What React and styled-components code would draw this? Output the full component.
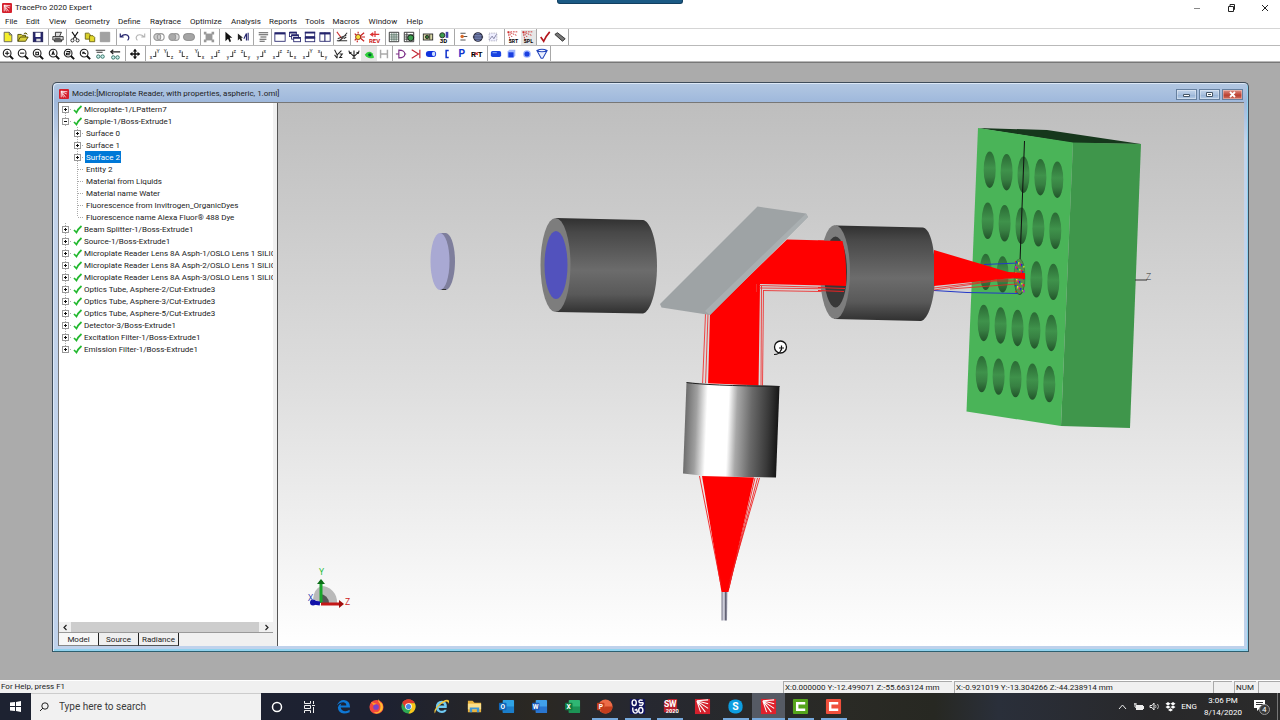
import React, { useState } from 'react';
import styled, { createGlobalStyle, css } from 'styled-components';

const GlobalStyle = createGlobalStyle`
    * {
        box-sizing: border-box;
    }
    body {
        margin: 0;
        font-family: "Roboto", "Open Sans", sans-serif;
        font-size: 8px;
        line-height: 12px;
        color: #222;
        background: #fff;
    }
    button, input {
        font: inherit;
        color: inherit;
        margin: 0;
        padding: 0;
        border: 0;
        background: none;
        border-radius: 0;
    }
    svg {
        display: block;
    }
`;

const Shell = styled.div`
    position: relative;
    display: flex;
    flex-direction: column;
    height: 100vh;
    overflow: hidden;
`;

const DockedTab = styled.div`
    position: absolute;
    top: 0;
    left: 50%;
    width: 126px;
    height: 4px;
    margin-left: -83px;
    background: #1b5a85;
    border: 1px solid #123f60;
    border-top: 0;
    border-radius: 0 0 3px 3px;
`;

const TitleBar = styled.header`
    display: flex;
    align-items: center;
    height: 15px;
    padding-left: 2px;
    gap: 3px;
    h1 {
        flex: 1;
        margin: 0;
        font-size: 8px;
        font-weight: normal;
    }
`;

const CaptionButton = styled.button`
    display: flex;
    align-items: center;
    justify-content: center;
    width: 31px;
    height: 14px;
`;

const MenuBar = styled.nav`
    display: flex;
    height: 14px;
    align-items: center;
    padding-left: 1px;
    border-bottom: 1px solid #d5d5d5;
`;

const MenuButton = styled.button`
    padding: 0 4px;
    white-space: nowrap;
    flex: 0 0 ${(p) => p.$w}px;
    text-align: left;
    line-height: 12px;
`;

const ToolRow = styled.div`
    display: flex;
    height: ${(p) => p.$h}px;
    border-bottom: 1px solid #b9b9b9;
`;

const ToolGroup = styled.div`
    display: flex;
    align-items: center;
    flex: 0 0 ${(p) => p.$w}px;
    border-left: ${(p) => (p.$first ? 0 : 1)}px solid #a8a8a8;
    padding-right: ${(p) => p.$pad || 0}px;
`;

const ToolButton = styled.button`
    display: flex;
    flex: 1 1 0;
    align-items: center;
    justify-content: center;
    height: 15px;
    min-width: 0;
    background: ${(p) => (p.$on ? '#e6e6e6' : 'none')};
`;

const Workspace = styled.main`
    flex: 1;
    min-height: 0;
    display: flex;
    padding: 19px 31px 28px 52px;
    background: #ababab;
    border-top: 1px solid #777;
`;

const ModelWindow = styled.section`
    flex: 1;
    min-width: 0;
    display: flex;
    flex-direction: column;
    border: 1px solid #3f4c59;
    border-bottom-color: #2d6070;
    border-radius: 5px 5px 0 0;
    padding: 0 4px 5px 5px;
    background: linear-gradient(#b3c8e2 0, #a0b9dc 18px, #c3d3ea 60px, #bfd2ec 100%);
    box-shadow: inset 1px 1px 0 #dce8f6, inset -1px -2px 0 #8fd2ee;
`;

const ModelTitle = styled.header`
    display: flex;
    align-items: center;
    height: 19px;
    gap: 3px;
    padding-top: 3px;
    padding-left: 1px;
    h2 {
        flex: 1;
        margin: 0;
        font-size: 8px;
        font-weight: normal;
    }
`;

const FrameButton = styled.button`
    display: flex;
    align-items: center;
    justify-content: center;
    width: 21px;
    height: 11px;
    border: 1px solid #66809f;
    background: ${(p) => (p.$close
        ? 'linear-gradient(#dd9288, #c24a3b 50%, #b23a2c 51%, #d06e5e)'
        : 'linear-gradient(#c3d5eb, #a9c0de 50%, #93afd3 51%, #b6cce6)')};
    box-shadow: inset 0 0 0 1px rgba(255, 255, 255, 0.35);
`;

const FrameButtons = styled.div`
    display: flex;
    gap: 2px;
    padding-right: 1px;
`;

const Split = styled.div`
    flex: 1;
    min-height: 0;
    display: flex;
    border-top: 1px solid #777;
    border-left: 1px solid #777;
`;

const TreePane = styled.aside`
    flex: 0 0 219px;
    display: flex;
    flex-direction: column;
    min-width: 0;
    padding-right: 4px;
    background: #f0f0f0;
    border-right: 1px solid #555;
`;

const Tree = styled.ul`
    flex: 1;
    margin: 0;
    padding: 0;
    overflow: hidden;
    list-style: none;
    background: #fff;
    ul {
        margin: 0;
        padding: 0;
        list-style: none;
    }
`;

const TreeRow = styled.div`
    display: flex;
    align-items: center;
    height: 12px;
    padding-left: ${(p) => (p.$child ? 15 : 3)}px;
    white-space: nowrap;
    svg {
        flex: none;
    }
`;

const TreeLabel = styled.button`
    padding: 1px 1px 0;
    height: 12px;
    line-height: 11px;
    white-space: nowrap;
    ${(p) => p.$selected && css`
        background: #0078d7;
        color: #fff;
    `}
`;

const ScrollBar = styled.div`
    display: flex;
    height: 10px;
    button {
        display: flex;
        align-items: center;
        justify-content: center;
        width: 12px;
    }
    div {
        flex: 1;
        margin-right: 2px;
        background: #cdcdcd;
    }
`;

const TabStrip = styled.div`
    display: flex;
    height: 14px;
    border-top: 1px solid #999;
`;

const Tab = styled.button`
    flex: 0 0 40px;
    line-height: 12px;
    padding-top: 1px;
    border-right: 1px solid #222;
    border-bottom: 1px solid ${(p) => (p.$active ? '#888' : '#555')};
    background: ${(p) => (p.$active ? '#f7f7f7' : '#efefef')};
`;

const Viewport = styled.div`
    flex: 1;
    min-width: 0;
    background: linear-gradient(#bebebe, #dedede 52%, #fff);
    svg {
        width: 100%;
        height: 100%;
    }
`;

const StatusBar = styled.footer`
    display: flex;
    height: 13px;
    align-items: center;
    gap: 2px;
    padding-left: 1px;
    background: #f0f0f0;
    border-top: 1px solid #fff;
    p {
        flex: 1;
        margin: 0;
    }
`;

const StatusPane = styled.div`
    flex: 0 0 ${(p) => p.$w}px;
    height: 12px;
    line-height: 11px;
    padding-left: 1px;
    border-left: 1px solid #a9a9a9;
    border-top: 1px solid #a9a9a9;
    white-space: nowrap;
`;

const TaskBar = styled.footer`
    display: flex;
    height: 27px;
    color: #fff;
    background: linear-gradient(90deg, #1d2231 0, #1d2131 30%, #2b2822 42%, #262831 50%, #2a2a25 66%, #272822 73%, #2a2f3a 78%, #28282a 90%, #2b2b2b);
`;

const TaskButton = styled.button`
    display: flex;
    align-items: center;
    justify-content: center;
    width: ${(p) => p.$w || 32}px;
    min-width: 0;
    height: 27px;
    border-bottom: 2px solid ${(p) => (p.$active ? '#76a9dc' : 'transparent')};
    border-top: 2px solid transparent;
    background: ${(p) => {
        if (p.$active) return '#555a64';
        return p.$open ? 'linear-gradient(#76a9dc, #76a9dc) center bottom / 26px 2px no-repeat border-box' : 'none';
    }};
`;

const SearchBox = styled.label`
    display: flex;
    align-items: center;
    width: 230px;
    gap: 10px;
    padding-left: 8px;
    background: #f1f1f1;
    border-top: 1px solid #ccc;
    input {
        flex: 1;
        min-width: 0;
        font-size: 10px;
        line-height: 16px;
        color: #333;
        outline: 0;
    }
    input::placeholder {
        color: #3a3a3a;
        opacity: 1;
    }
`;

const PinnedApps = styled.div`
    display: grid;
    grid-template-columns: repeat(16, 1fr);
    flex: 0 0 523px;
    margin-left: 2px;
    ${TaskButton} {
        width: auto;
    }
`;

const Tray = styled.div`
    display: flex;
    align-items: center;
    margin-left: auto;
    border-right: 1px solid #777;
    margin-right: 2px;
`;

const TrayButton = styled.button`
    display: flex;
    align-items: center;
    justify-content: center;
    width: ${(p) => p.$w}px;
    height: 26px;
    white-space: nowrap;
`;

const Clock = styled.time`
    width: 46px;
    text-align: center;
    line-height: 12px;
`;

const INK = '#222';
const NAVY = '#24246c';

/* ---- toolbar drawings, all on a 14 x 14 grid ---- */

const rect = (x, y, w, h, fill = 'none', stroke = INK) => (
    <rect x={x} y={y} width={w} height={h} fill={fill} stroke={stroke} />
);

function axis(a, b, flip) {
    return (
        <>
            <path d={flip ? 'M9 4v6H6' : 'M5 4v6h3'} fill="none" stroke="#444" strokeWidth="1.200" />
            <text x={flip ? 10 : 1} y="6" fontSize="6" fill="#222">{a}</text>
            <text x={flip ? 2 : 9} y="13" fontSize="6" fill="#222">{b}</text>
        </>
    );
}

function magnifier(mark) {
    return (
        <>
            <circle cx="6" cy="6" r="4.500" fill="#fff" stroke="#222" strokeWidth="1.300" />
            <path d="M9 9l4 4" stroke="#111" strokeWidth="2.200" />
            <path d={mark} fill="none" stroke="#111" strokeWidth="1.200" />
        </>
    );
}

const ICONS = {
    new: <path d="M2.500 1.500h6l3 3v8h-9zM8.500 1.500v3h3" fill="#f5ee2c" stroke="#555" />,
    open: <path d="M1 12V4h4l1 1h4v2h3l-3 5zM1 12l3-5h6M8 3q3-2 4 1" fill="#d8cf3c" stroke="#454100" />,
    save: <>{rect(1.5, 1.5, 11, 11, '#24246c', '#1b1b50')}<path d="M4 2h6v5H4z" fill="#fff" /><path d="M5 9h5v3H5z" fill="#ddd" /></>,
    print: <><path d="M4 6V1.500h7L9 6M1 6.500h12v4H1zM3 10.500h8v2H3z" fill="#ddd" stroke="#222" /><path d="M3 8.500h7" stroke="#222" /></>,
    cut: <><path d="M3.500 1L9 9M10.500 1L5 9" stroke="#111" strokeWidth="1.300" /><circle cx="4" cy="11" r="1.800" fill="none" stroke="#111" /><circle cx="10" cy="11" r="1.800" fill="none" stroke="#111" /></>,
    copy: <><path d="M1.500 2.500h4l2 2v5h-6z" fill="#d9d02a" stroke="#666010" /><path d="M6.500 5.500h4l2 2v5h-6z" fill="#e4da2e" stroke="#666010" /></>,
    paste: <path d="M1.500 1.500h11v11h-11z" fill="#a2a2a2" stroke="#999" />,
    undo: <path d="M1.500 3v4h4M2 7q4-4 8-2 3 3 0 6" fill="none" stroke={NAVY} strokeWidth="1.400" />,
    redo: <path d="M12.500 3v4h-4M12 7q-4-4-8-2-3 3 0 6" fill="none" stroke="#b3b3b3" strokeWidth="1.300" />,
    subtract: <><circle cx="5" cy="7" r="4" fill="#ccc" stroke="#999" strokeWidth="1.300" /><circle cx="9" cy="7" r="4" fill="none" stroke="#999" strokeWidth="1.300" /></>,
    intersect: <><circle cx="9" cy="7" r="4" fill="#ddd" stroke="#999" strokeWidth="1.300" /><circle cx="5" cy="7" r="4" fill="#aaa" stroke="#999" strokeWidth="1.300" /></>,
    unite: <rect x="0.500" y="3" width="13" height="8" rx="4" fill="#a5a5a5" stroke="#888" />,
    solid: <><path d="M3 3h8v8H3z" fill="#999" /><path d="M1 1h3v3H1zM10 1h3v3h-3zM1 10h3v3H1zM10 10h3v3h-3z" fill="#999" /></>,
    pointer: <path d="M4 1v11l3-3 2 4 1.500-1L9 8h3z" fill="#111" />,
    pointerAlt: <><path d="M1 3v8l2-2 1.500 3L6 11 5 8h2z" fill="#222" /><path d="M8 9l3-6v8M13 2v9" fill="none" stroke={NAVY} strokeWidth="1.300" /></>,
    script: <path d="M2 2h11M2 4.500h11M4 7h7M3 9.500h8M3 12h6" stroke="#555" strokeWidth="1.200" />,
    window: <>{rect(1, 2, 12, 10, '#fff', NAVY)}<path d="M1 3h12" stroke={NAVY} strokeWidth="2" /></>,
    cascade: <>{rect(0.5, 1.5, 8, 5, '#fff', NAVY)}{rect(3, 4.5, 8, 5, '#fff', NAVY)}{rect(5.5, 7.5, 8, 5, '#fff', NAVY)}<path d="M1 2h8M3 5h8M5 8h8" stroke={NAVY} strokeWidth="2" /></>,
    tileH: <>{rect(1.5, 1.5, 11, 5, '#fff', NAVY)}{rect(1.5, 7.5, 11, 5, '#fff', NAVY)}<path d="M1 2h12M1 8h12" stroke={NAVY} strokeWidth="2" /></>,
    tileV: <>{rect(1, 2, 6, 10, '#fff', NAVY)}{rect(7, 2, 6, 10, '#fff', NAVY)}<path d="M1 3h12" stroke={NAVY} strokeWidth="2" /></>,
    rays: <><path d="M1 1l6 8" stroke="#c33" strokeWidth="1.300" /><path d="M7 9l6-7M2 9l10-4M1 11.500h12M7 9l-4 3M9 9l3-2" fill="none" stroke="#333" strokeWidth="1.200" /></>,
    source: <><path d="M7 7l6-5M8 7h6M7 7l6 5M6 3V1M5 11v2M2 3l2 2M2 11l2-2" stroke="#c22" strokeWidth="1.400" /><circle cx="6" cy="7" r="3" fill="#f4e13c" stroke="#8a2213" /></>,
    reverse: <><path d="M2 4h10M5 2L2 4l3 2M7 0v7" fill="none" stroke="#d33" strokeWidth="1.400" /><text x="0" y="14" fontSize="7" fontWeight="bold" fill="#c22">REV</text></>,
    grid: <><path d="M1.500 1.500h11v11h-11z" fill="#fff" stroke="#222" /><path d="M4.500 2v10M7 2v10M9.500 2v10M2 4.500h10M2 7h10M2 9.500h10" stroke="#354" strokeWidth="0.800" /></>,
    gridMap: <><path d="M1.500 1.500h11v11h-11z" fill="#fff" stroke="#222" /><path d="M4.500 2v10M2 4.500h10M2 7h5M2 9.500h5" stroke="#333" /><circle cx="9" cy="8" r="3.500" fill="#3b9c4e" stroke="#111" /></>,
    candela: <>{rect(1.5, 3.5, 11, 7, '#d7d7a6')}<circle cx="6" cy="7" r="2" fill="#373" stroke="#222" /><path d="M9 4v6" stroke="#222" /></>,
    globe3d: <><circle cx="5" cy="5" r="3" fill="#3b9c4e" stroke="#222" /><path d="M9 1h3v7H9z" fill="#44a" /><text x="2" y="14" fontSize="7" fontWeight="bold">3D</text></>,
    polar: <><path d="M4 2.500h6M7 6.500h5M4 10.500h6" stroke="#555" strokeWidth="1.200" /><circle cx="6" cy="6.500" r="2" fill="#d96a2a" /></>,
    sphere: <><circle cx="7" cy="7" r="5" fill="#8fa2e0" stroke="#223" strokeWidth="1.300" /><path d="M1 7h12M3 4.500h8M3 9.500h8" stroke="#223" /></>,
    chart: <><path d="M2.500 2.500h9v9h-9z" fill="#eef" stroke="#99a" strokeDasharray="1 1" /><path d="M3 10l3-4 2 3 3-5" fill="none" stroke="#779" /></>,
    sort: <><path d="M1 1l3 11M1 1l5 6M1 1l10 4M1 1l12 0" stroke="#c22" strokeDasharray="2 1" /><text x="2" y="14" fontSize="6" fontWeight="bold">SRT</text></>,
    spline: <><path d="M1 1l3 11M1 1l5 6M1 1l10 4M1 1l12 0" stroke="#c22" strokeDasharray="2 1" /><text x="2" y="14" fontSize="6" fontWeight="bold">SPL</text></>,
    check: <path d="M2 7l3.500 5Q8 6 12.500 1" fill="none" stroke="#b3151c" strokeWidth="1.900" />,
    eraser: <path d="M1 4l3-2 9 7-3 3z" fill="#777" stroke="#222" />,
    zoomIn: magnifier('M3.500 6h5M6 3.500v5'),
    zoomOut: magnifier('M3.500 6h5'),
    zoomWin: magnifier('M4.500 5h3v3h-3z'),
    zoomAll: magnifier('M4.500 8l1.500-4 1.500 4M5 7h2'),
    zoomSel: magnifier('M4 4h4v2H4v2h4'),
    zoomPrev: magnifier('M8 7L4.500 5M4.500 7V5h2'),
    glasses: <><path d="M2 2.500h11M3 5h7" stroke="#333" strokeWidth="1.200" /><circle cx="5" cy="10" r="2" fill="#cee" stroke="#265" /><circle cx="10" cy="10" r="2" fill="#cee" stroke="#265" /></>,
    glassesBack: <><path d="M2 4.500h11M5 2L2 4.500 5 7" fill="none" stroke="#222" strokeWidth="1.300" /><circle cx="5" cy="11" r="2" fill="#cee" stroke="#265" /><circle cx="10" cy="11" r="2" fill="#cee" stroke="#265" /></>,
    pan: <><path d="M7 2v10M2 7h10" stroke="#111" strokeWidth="1.700" /><path d="M7 1l2.500 3h-5zM7 13l2.500-3h-5zM1 7l3-2.500v5zM13 7l-3-2.500v5z" fill="#111" /></>,
    a1: axis('Y', 'x', true),
    a2: axis('Y', 'z'),
    a3: axis('x', 'z'),
    a4: axis('Y', 'x'),
    a5: axis('z', 'x', true),
    a6: axis('z', 'y', true),
    a7: axis('z', 'y'),
    a8: axis('x', 'y', true),
    a9: axis('z', 'x', true),
    a10: axis('z', 'x'),
    a11: axis('Y', 'x', true),
    a12: axis('x', 'y'),
    a13: <path d="M3 2l3 6 5-5M6 8v4M9 7h3l-3 4h3M3 8l3 4" fill="none" stroke="#222" strokeWidth="1.200" />,
    a14: <path d="M7 3v9M2 5l5 5 5-5M1 3l1 3 2-1M13 3l-1 3-2-1M5 12h4" fill="none" stroke="#222" strokeWidth="1.300" />,
    eye: <><path d="M2 8q4-6 9-2l2 5q-7 3-11-3" fill="#2fcf3a" /><circle cx="8" cy="8" r="2" fill="#063" /></>,
    hidden: <path d="M3 2v10M11 2v10M3 7h8" stroke="#aaa" strokeWidth="1.700" />,
    lens: <path d="M4.500 2.500v9q7 0 7-4.500t-7-4.500zM4 7H1M11 7h2" fill="#fff" stroke="#7a2c86" strokeWidth="1.300" />,
    mirror: <path d="M2 2l8 5-8 5M11.500 2v10" fill="none" stroke="#c22430" strokeWidth="1.300" />,
    tube: <><rect x="1" y="3.500" width="12" height="7" rx="3.500" fill="#1133dd" /><ellipse cx="10" cy="7" rx="2" ry="2.500" fill="#cfe0ff" /></>,
    bracket: <path d="M9 3H6v8h3" fill="none" stroke="#1133cc" strokeWidth="1.800" />,
    letterP: <text x="3" y="11" fontSize="12" fontWeight="bold" fill="#1133cc">P</text>,
    rt: <><text x="0" y="11" fontSize="9" fontWeight="bold">R</text><text x="8" y="11" fontSize="9" fontWeight="bold">T</text><path d="M5 5l3 3M8 5L5 8" stroke="#c22" strokeWidth="1.300" /></>,
    rod: <><rect x="1" y="3.500" width="12" height="7" rx="2" fill="#1a44e0" /><path d="M3 5.500h5" stroke="#9bf" /></>,
    block: <><path d="M3 4l2-2h7v7l-2 2H3z" fill="#9fb6ff" /><path d="M4 5h6v6H4z" fill="#1a3fe0" /></>,
    ball: <><circle cx="7" cy="7" r="4.500" fill="#9fb6ff" /><circle cx="7" cy="7" r="3" fill="#1a3fe0" /></>,
    cone: <path d="M1 3q6-3 12 0L8 12H6zM1 3q6 3 12 0" fill="#e8eeff" stroke="#2244bb" strokeWidth="1.200" />
};

function Icon({ name }) {
    return <svg width="12" height="12" viewBox="0 0 14 14" aria-hidden="true">{ICONS[name]}</svg>;
}

const MENUS = [
    ['File', 21], ['Edit', 23], ['View', 26], ['Geometry', 43], ['Define', 32], ['Raytrace', 40], ['Optimize', 41],
    ['Analysis', 38], ['Reports', 36], ['Tools', 27], ['Macros', 36], ['Window', 38], ['Help', 26]
];

const TOP_TOOLS = [
    { w: 48, pad: 2, items: ['new', 'open', 'save'] },
    { w: 18, items: ['print'] },
    { w: 50, pad: 3, items: ['cut', 'copy', 'paste'] },
    { w: 34, pad: 2, items: ['undo', 'redo'] },
    { w: 50, pad: 3, items: ['subtract', 'intersect', 'unite'] },
    { w: 19, pad: 2, items: ['solid'] },
    { w: 34, pad: 2, items: ['pointer', 'pointerAlt'] },
    { w: 18, items: ['script'] },
    { w: 62, items: ['window', 'cascade', 'tileH', 'tileV'] },
    { w: 17, items: ['rays'] },
    { w: 35, pad: 2, items: ['source', 'reverse'] },
    { w: 34, pad: 2, items: ['grid', 'gridMap'] },
    { w: 35, pad: 2, items: ['candela', 'globe3d'] },
    { w: 50, pad: 3, items: ['polar', 'sphere', 'chart'] },
    { w: 32, items: ['sort', 'spline'] },
    { w: 32, items: ['check', 'eraser'] },
    { w: 1, items: [] }
];

const VIEW_TOOLS = [
    { w: 125, pad: 2, items: ['zoomIn', 'zoomOut', 'zoomWin', 'zoomAll', 'zoomSel', 'zoomPrev', 'glasses', 'glassesBack'] },
    { w: 20, pad: 2, items: ['pan'] },
    { w: 247, items: ['a1', 'a2', 'a3', 'a4', 'a5', 'a6', 'a7', 'a8', 'a9', 'a10', 'a11', 'a12', 'a13', 'a14', 'eye', 'hidden'] },
    { w: 95, pad: 2, items: ['lens', 'mirror', 'tube', 'bracket', 'letterP', 'rt'] },
    { w: 63, items: ['rod', 'block', 'ball', 'cone'] },
    { w: 1, items: [] }
];

function Toolbar({ groups, height, pressed }) {
    return (
        <ToolRow $h={height} role="toolbar">
            {groups.map((group, i) => (
                <ToolGroup key={`group-${group.items[0] || 'end'}`} $w={group.w} $pad={group.pad} $first={i === 0}>
                    {group.items.map((name) => (
                        <ToolButton key={name} type="button" aria-label={name} $on={pressed === name}>
                            <Icon name={name} />
                        </ToolButton>
                    ))}
                </ToolGroup>
            ))}
        </ToolRow>
    );
}

const TREE = [
    { label: 'Microplate-1/LPattern7' },
    {
        label: 'Sample-1/Boss-Extrude1',
        children: [
            'Surface 0', 'Surface 1', 'Surface 2', 'Entity 2', 'Material from Liquids', 'Material name Water',
            'Fluorescence from Invitrogen_OrganicDyes', 'Fluorescence name Alexa Fluor® 488 Dye'
        ]
    },
    { label: 'Beam Splitter-1/Boss-Extrude1' },
    { label: 'Source-1/Boss-Extrude1' },
    { label: 'Microplate Reader Lens 8A Asph-1/OSLO Lens 1 SILICA' },
    { label: 'Microplate Reader Lens 8A Asph-2/OSLO Lens 1 SILICA' },
    { label: 'Microplate Reader Lens 8A Asph-3/OSLO Lens 1 SILICA' },
    { label: 'Optics Tube, Asphere-2/Cut-Extrude3' },
    { label: 'Optics Tube, Asphere-3/Cut-Extrude3' },
    { label: 'Optics Tube, Asphere-5/Cut-Extrude3' },
    { label: 'Detector-3/Boss-Extrude1' },
    { label: 'Excitation Filter-1/Boss-Extrude1' },
    { label: 'Emission Filter-1/Boss-Extrude1' }
];

function Branch({ open, box = true, check, first, last }) {
    return (
        <svg width={check ? 21 : 11} height="12" viewBox={`0 0 ${check ? 21 : 11} 12`} aria-hidden="true">
            <path d={`M3.500 ${first ? 6 : 0}V${last ? 6 : 12}M4 6.500h6`} stroke="#aaa" strokeDasharray="1 1" />
            {box && (
                <>
                    <rect x="0.500" y="3.500" width="6" height="6" fill="#fff" stroke="#999" />
                    <path d={open ? 'M2 6.500h3' : 'M2 6.500h3M3.500 5v3'} stroke="#111" />
                </>
            )}
            {check && <path d="M12 7l2.500 2.500Q16 6 19.500 3" fill="none" stroke="#22b82e" strokeWidth="1.700" />}
        </svg>
    );
}

function ModelTree() {
    const [selected, setSelected] = useState('Surface 2');

    return (
        <Tree>
            {TREE.map((node, i) => (
                <li key={node.label}>
                    <TreeRow>
                        <Branch check open={!!node.children} first={i === 0} last={i === TREE.length - 1} />
                        <TreeLabel type="button" $selected={selected === node.label} onClick={() => setSelected(node.label)}>
                            {node.label}
                        </TreeLabel>
                    </TreeRow>
                    {node.children && (
                        <ul>
                            {node.children.map((label, n) => (
                                <li key={label}>
                                    <TreeRow $child>
                                        <Branch box={n < 3} last={n === node.children.length - 1} />
                                        <TreeLabel type="button" $selected={selected === label} onClick={() => setSelected(label)}>
                                            {label}
                                        </TreeLabel>
                                    </TreeRow>
                                </li>
                            ))}
                        </ul>
                    )}
                </li>
            ))}
        </Tree>
    );
}

/* ---- the 3D model ---- */

const STEPS = [0, 1, 2, 3, 4];
const SPECKS = ['#e22', '#22d', '#2b4', '#dd2', '#a2c'];

function Scene() {
    return (
        <svg viewBox="278 103 966 543" preserveAspectRatio="xMidYMid slice" role="img" aria-label="Microplate reader model">
            <defs>
                <linearGradient id="tube" x1="0" y1="0" x2="0" y2="1">
                    <stop offset="0" stopColor="#303030" />
                    <stop offset="0.150" stopColor="#484848" />
                    <stop offset="0.550" stopColor="#6c6c6c" />
                    <stop offset="0.800" stopColor="#595959" />
                    <stop offset="1" stopColor="#303030" />
                </linearGradient>
                <linearGradient id="steel" x1="0" y1="0" x2="1" y2="0.040">
                    <stop offset="0" stopColor="#5c5c5c" />
                    <stop offset="0.150" stopColor="#a0a0a0" />
                    <stop offset="0.260" stopColor="#fff" />
                    <stop offset="0.480" stopColor="#fff" />
                    <stop offset="0.570" stopColor="#a8a8a8" />
                    <stop offset="0.720" stopColor="#6a6a6a" />
                    <stop offset="0.900" stopColor="#383838" />
                    <stop offset="1" stopColor="#161616" />
                </linearGradient>
                <linearGradient id="well" x1="0" y1="0" x2="0" y2="1">
                    <stop offset="0" stopColor="#2a6a34" />
                    <stop offset="0.450" stopColor="#3f924b" />
                    <stop offset="0.700" stopColor="#378042" />
                    <stop offset="1" stopColor="#22542a" />
                </linearGradient>
                <linearGradient id="fiber">
                    <stop offset="0" stopColor="#777788" />
                    <stop offset="0.450" stopColor="#e8e8f4" />
                    <stop offset="0.600" stopColor="#555566" />
                    <stop offset="1" stopColor="#a8a8bb" />
                </linearGradient>
            </defs>

            {/* emission filter */}
            <path d="M440 233h6c5 1 9 13 9 28s-4 28-9 29h-6z" fill="#7e7e9c" />
            <path d="M440 289.500h6" stroke="#333" />
            <ellipse cx="440" cy="261.500" rx="9.500" ry="28.500" fill="#a9a9d3" />

            {/* detector tube */}
            <path d="M556 218l87 2c7 1 14 19 14 46s-7 46-14 47.500l-87-1.500z" fill="url(#tube)" />
            <ellipse cx="555.500" cy="265" rx="15" ry="47" fill="#7d7d7d" />
            <ellipse cx="556" cy="265" rx="11.500" ry="34" fill="#5252bd" />

            {/* rays between the tubes */}
            <path d="M710 314L787 239.500L846 241V286L760 284L758.500 388L708 386z" fill="#f00" />
            <path d="M705.500 314l-3 71M708 314l-2.500 71M761.500 286l-.500 100M763.500 290l-1 96M759 288l87 1M759 285.500l87 2.500M763 290.500l83 1.500M756.500 284v8" fill="none" stroke="#e33" strokeWidth="0.900" />

            {/* beam splitter */}
            <path d="M660 304L757.500 206.500L806 213.500L808 217L710 315L661.500 307.500z" fill="#9ea3a5" />
            <path d="M710 315L808 217L806 213.500L705 311z" fill="#a9afb1" />

            {/* objective tube */}
            <path d="M836 225.500l87 2c7 1 12 19 12 46s-7 46-14 47.500l-87-2z" fill="url(#tube)" />
            <ellipse cx="835" cy="272" rx="15" ry="47" fill="#7d7d7d" />
            <ellipse cx="835.500" cy="272" rx="11.500" ry="35.500" fill="#383838" />
            <path d="M818 240.500L842.500 241Q847 258 846 286L818 285z" fill="#f00" />
            <path d="M818 287.500l27 1M818 290.500l26 1" stroke="#e22" />

            {/* condenser */}
            <path d="M686.500 382.500L779.500 386L776 477.500L710 476.500L683 473.500z" fill="url(#steel)" />
            <path d="M686.500 382.500q20 3 93 4" fill="none" stroke="#222" />
            <path d="M702 476L754 477.500L728.500 592H721.500z" fill="#f00" />
            <path d="M699.500 476L721 585M755 478L729 588M757.500 478L729 586M759.500 478L730 580" stroke="#e22" strokeWidth="0.900" fill="none" />
            <path d="M721.500 592h6l-.500 28.500h-5.500z" fill="url(#fiber)" />

            {/* microplate */}
            <path d="M978 128L1047 130L1141 144L1072 143z" fill="#16371c" />
            <path d="M978 128L1073 142.500L1061 426L966.500 411.500z" fill="#4ab458" />
            <path d="M1073 142.500L1141 144L1130 428L1061 426z" fill="#3f964b" />
            {STEPS.map((row) => STEPS.map((col) => (
                <ellipse
                    key={`well-${row}-${col}`}
                    cx={989.7 + col * 16.9 - row * 2}
                    cy={169.7 + col * 2.5 + row * 51.1}
                    rx="6"
                    ry="18.200"
                    fill="url(#well)"
                />
            )))}
            <path d="M1024.500 141L1020 262" stroke="#111" />

            {/* focused rays */}
            <ellipse cx="1019.500" cy="276.500" rx="5" ry="17.500" fill="#5a8a4a" />
            {Array.from({ length: 64 }, (_, i) => (
                <rect
                    key={`speck-${i}`}
                    x={1015 + ((i * 7) % 9)}
                    y={261 + ((i * 11) % 31)}
                    width="1.500"
                    height="1.500"
                    fill={SPECKS[i % 5]}
                />
            ))}
            <path d="M984 264.500l34-1.500M934 290.500l33 2 51 1" fill="none" stroke="#2338c8" />
            <path d="M934 250L1008 272L1025 273V279L1012 278L934 286z" fill="#f00" />
            <path d="M934 288l80-10M934 290l60-9 23 0M950 289l67-5" fill="none" stroke="#e22" strokeWidth="0.800" />
            <path d="M1135 280h12" stroke="#333" />
            <text x="1146" y="280" fontSize="9" fontFamily="Open Sans" fontWeight="300" fill="#333">Z</text>

            {/* rotate cursor */}
            <circle cx="780.500" cy="347" r="6" fill="#fff" stroke="#111" strokeWidth="1.300" />
            <path d="M779 348h5M781.500 345.500v5M774 354.500q6 0 7-5" fill="none" stroke="#111" strokeWidth="1.200" />

            {/* view triad */}
            <path d="M321 603v-17a16 16 0 0 1 16 17zM321 586q-7 3-8 13l8 4z" fill="#b9b9b9" />
            <path d="M320 603v-9a9 9 0 0 1 9 9z" fill="#555" />
            <path d="M321 603V581" stroke="#18a62a" strokeWidth="3" />
            <path d="M321 579l-4 5h8z" fill="#0c6e18" />
            <path d="M321 604h19" stroke="#c41616" strokeWidth="3" />
            <path d="M344 604l-5-4v8z" fill="#a00d0d" />
            <path d="M313 602.500l7 1" stroke="#11a" strokeWidth="4" />
            <circle cx="313" cy="602.500" r="3" fill="#1212a8" />
            <g fontFamily="Open Sans" fontSize="9">
                <text x="319" y="575" fill="#2b3">Y</text>
                <text x="345" y="605" fill="#c22">Z</text>
                <text x="308" y="601" fill="#23a">X</text>
            </g>
        </svg>
    );
}

/* ---- app and taskbar icons, 18 x 18 ---- */

const TP_MARK = (
    <path d="M3 3l12 3M3 3l12 8M3 3l9 12M3 3l4 12M3 3l12-1" stroke="#fff" fill="none" strokeWidth="1.100" />
);

function office(letter, dark, light) {
    return (
        <>
            <rect x="5" y="2" width="12" height="14" rx="1" fill={light} />
            <path d="M5 9h12v6a1 1 0 0 1-1 1H6a1 1 0 0 1-1-1z" fill={dark} opacity="0.600" />
            <rect x="1" y="5" width="8" height="8" rx="1" fill={dark} />
            <text x="5" y="11.500" fontSize="7" fontWeight="bold" fill="#fff" textAnchor="middle">{letter}</text>
        </>
    );
}

const APPS = [
    { name: 'Edge', art: <path d="M2 8Q4 2 9.500 2 16 2.500 16 10H6q1 4 5 4 2.500 0 4.500-1.500V15q-3 1.500-6 1.500-6-.500-6.500-6.500Q3.500 7 7 5.500 6 7 6 8h6q0-3-3-3.500Q5 4.500 2 8z" fill="#0f78d4" /> },
    { name: 'Firefox', art: <><circle cx="9" cy="9.500" r="7.500" fill="#f4483e" /><path d="M11 1q1 3 4 5 2 5-1 8-4 4-8 1 6 1 7-4 1-4-2-7z" fill="#ffbd2e" /><path d="M3 4l3 1 3 1-2 3z" fill="#ff9a2b" /><circle cx="8.500" cy="9.500" r="3" fill="#7b42c8" /></> },
    { name: 'Chrome', art: <><circle cx="9" cy="9" r="7.500" fill="#2ea853" /><path d="M2.500 5.200A7.500 7.500 0 0 1 15.500 5.200L9 6z" fill="#e33b2e" /><path d="M2.500 5.200L5.800 11 9 5.500h6.600A7.500 7.500 0 0 0 2.500 5.200z" fill="#e33b2e" /><path d="M15.600 5.500A7.500 7.500 0 0 1 9 16.500l3.200-5.600L9.500 5.500z" fill="#fbc51b" /><circle cx="9" cy="9" r="3.500" fill="#fff" /><circle cx="9" cy="9" r="2.700" fill="#4b86e8" /></> },
    { name: 'Internet Explorer', art: <><path d="M14.500 10.500H6q.500 3 3.500 3 2 0 2.500-1h2.500Q13 16 9.500 16q-6.500-.500-6.500-6.500T9.500 3q6 .500 5 7.500zM6 8h6Q11.500 5.500 9 5.500T6 8z" fill="#6fc9f2" /><path d="M2 16.500Q0 13 6 7t10-5q2 1 0 4 0-3-3-2Q4 8 2 16.500z" fill="#f3c63a" /></> },
    { name: 'File Explorer', art: <><path d="M2 3h5l2 2h7v10H2z" fill="#eab33d" /><path d="M2 6h14v6H2z" fill="#fbdf8b" /><path d="M4 15v-5h10v5h-2.500v-3h-5v3z" fill="#3c96d8" /></> },
    { name: 'Outlook', art: office('O', '#0f65b8', '#2fa3e6') },
    { name: 'Word', art: office('W', '#1a5abc', '#41a0ea') },
    { name: 'Excel', art: office('X', '#107c41', '#2fb673') },
    { name: 'PowerPoint', open: true, art: <><circle cx="10" cy="9" r="7.500" fill="#ed6c47" /><path d="M10 9h7.500a7.500 7.500 0 0 1-13 5z" fill="#c43e1c" /><rect x="1" y="5" width="8" height="8" rx="1" fill="#c43e1c" /><text x="3" y="11.500" fontSize="7" fontWeight="bold" fill="#fff">P</text></> },
    { name: 'OSLO', open: true, art: <><rect x="1" y="1" width="16" height="16" fill="#12155c" /><g fill="none" stroke="#fff" strokeWidth="1.500"><ellipse cx="5.500" cy="5" rx="2.200" ry="3" /><path d="M14.500 2.500q-4-1-4 1t3 1.500 0 3l-3-.500" /><path d="M4 10v2q0 4 3 4t1-4l-2 1" /><ellipse cx="12.500" cy="13" rx="2.200" ry="3" /></g></> },
    { name: 'SOLIDWORKS', open: true, art: <><path d="M2 4l5-3h9v11l-3 3H2z" fill="#b9202a" /><text x="2" y="10" fontSize="9" fontWeight="bold" fill="#fff">SW</text><text x="4" y="16" fontSize="6" fontWeight="bold" fill="#fff">2020</text></> },
    { name: 'TracePro', art: <><rect x="1" y="1" width="16" height="16" fill="#d4202c" />{TP_MARK}</> },
    { name: 'Skype', open: true, art: <><rect x="1.500" y="1.500" width="15" height="15" rx="6.500" fill="#0d9de0" /><text x="9" y="13" fontSize="11" fontWeight="bold" fill="#fff" textAnchor="middle">S</text></> },
    { name: 'TracePro 2020', open: true, active: true, art: <><rect x="1" y="1" width="16" height="16" fill="#e0202b" />{TP_MARK}</> },
    { name: 'Camtasia', open: true, art: <><rect x="1" y="1" width="16" height="16" rx="1" fill="#55a51c" /><path d="M14 5.500H5.500v7H14" fill="none" stroke="#fff" strokeWidth="2.600" /></> },
    { name: 'Camtasia Recorder', open: true, art: <><rect x="1" y="1" width="16" height="16" rx="1" fill="#f0503c" /><path d="M14 5.500H5.500v7H14" fill="none" stroke="#fff" strokeWidth="2.600" /></> }
];

function Logo({ size }) {
    return (
        <svg width={size} height={size} viewBox="0 0 18 18" aria-hidden="true">
            <rect width="18" height="18" rx="2" fill="#d5202c" />
            <path d="M4 4v11M4 4l11 1M4 4l10 5M4 4l8 11M4 4l4 11" stroke="#fff" strokeWidth="1.400" />
        </svg>
    );
}

export default function App() {
    const [tab, setTab] = useState('Model');

    return (
        <Shell>
            <GlobalStyle />
            <TitleBar>
                <Logo size={10} />
                <h1>TracePro 2020 Expert</h1>
                <CaptionButton type="button" aria-label="Minimize">
                    <svg width="8" height="8"><path d="M1 4.500h6" stroke="#888" /></svg>
                </CaptionButton>
                <CaptionButton type="button" aria-label="Restore">
                    <svg width="8" height="8"><path d="M1.500 2.500h5v5h-5zM3 2.500v-2h4.500v5H6" fill="none" stroke="#222" /></svg>
                </CaptionButton>
                <CaptionButton type="button" aria-label="Close">
                    <svg width="8" height="8"><path d="M1 1l6 6M7 1L1 7" stroke="#222" /></svg>
                </CaptionButton>
            </TitleBar>
            <DockedTab />
            <MenuBar>
                {MENUS.map(([label, width]) => (
                    <MenuButton key={label} type="button" $w={width}>{label}</MenuButton>
                ))}
            </MenuBar>
            <Toolbar groups={TOP_TOOLS} height={17} pressed="spline" />
            <Toolbar groups={VIEW_TOOLS} height={16} pressed="eye" />

            <Workspace>
                <ModelWindow>
                    <ModelTitle>
                        <Logo size={10} />
                        <h2>Model:[Microplate Reader, with properties, aspheric, 1.oml]</h2>
                        <FrameButtons>
                            <FrameButton type="button" aria-label="Minimize model">
                                <svg width="9" height="7"><path d="M1.500 3.500h6v2h-6z" fill="#fff" stroke="#456" /></svg>
                            </FrameButton>
                            <FrameButton type="button" aria-label="Maximize model">
                                <svg width="9" height="7"><path d="M1.500 1.500h6v4h-6z" fill="#fff" stroke="#456" /><path d="M3 3.500h3" stroke="#456" /></svg>
                            </FrameButton>
                            <FrameButton type="button" aria-label="Close model" $close>
                                <svg width="9" height="7"><path d="M2 1l5 5M7 1L2 6" stroke="#fff" strokeWidth="1.800" /></svg>
                            </FrameButton>
                        </FrameButtons>
                    </ModelTitle>
                    <Split>
                        <TreePane>
                            <ModelTree />
                            <ScrollBar>
                                <button type="button" aria-label="Scroll left">
                                    <svg width="6" height="7"><path d="M4.500 1L2 3.500 4.500 6" fill="none" stroke="#222" strokeWidth="1.200" /></svg>
                                </button>
                                <div />
                                <button type="button" aria-label="Scroll right">
                                    <svg width="6" height="7"><path d="M1.500 1L4 3.500 1.500 6" fill="none" stroke="#222" strokeWidth="1.200" /></svg>
                                </button>
                            </ScrollBar>
                            <TabStrip>
                                {['Model', 'Source', 'Radiance'].map((name) => (
                                    <Tab key={name} type="button" $active={tab === name} onClick={() => setTab(name)}>{name}</Tab>
                                ))}
                            </TabStrip>
                        </TreePane>
                        <Viewport>
                            <Scene />
                        </Viewport>
                    </Split>
                </ModelWindow>
            </Workspace>

            <StatusBar>
                <p>For Help, press F1</p>
                <StatusPane $w={169}>X:0.000000 Y:-12.499071 Z:-55.663124 mm</StatusPane>
                <StatusPane $w={257}>X:-0.921019 Y:-13.304266 Z:-44.238914 mm</StatusPane>
                <StatusPane $w={19} />
                <StatusPane $w={22}>NUM</StatusPane>
                <StatusPane $w={22} />
            </StatusBar>

            <TaskBar>
                <TaskButton type="button" aria-label="Start" $w={31}>
                    <svg width="11" height="11"><path d="M0 1.500L5 1v4H0zM6 1l5-1v5H6zM0 6h5v4L0 9.500zM6 6h5v5l-5-1z" fill="#fff" /></svg>
                </TaskButton>
                <SearchBox>
                    <svg width="10" height="10" aria-hidden="true"><circle cx="6" cy="4" r="3.200" fill="none" stroke="#222" /><path d="M4 6L1 9" stroke="#222" /></svg>
                    <input type="text" aria-label="Search" placeholder="Type here to search" />
                </SearchBox>
                <TaskButton type="button" aria-label="Cortana">
                    <svg width="12" height="12"><circle cx="6" cy="6" r="4.500" fill="none" stroke="#fff" strokeWidth="1.500" /></svg>
                </TaskButton>
                <TaskButton type="button" aria-label="Task view">
                    <svg width="12" height="12"><path d="M1.500 0v2.500h6V0M1.500 4.500h6v3h-6zM1.500 12V9.500h6V12M10.500 0v3M10.500 6v6M9 4.500h3" fill="none" stroke="#eee" /></svg>
                </TaskButton>
                <PinnedApps>
                    {APPS.map((app) => (
                        <TaskButton key={app.name} type="button" aria-label={app.name} $open={app.open} $active={app.active}>
                            <svg width="17" height="17" viewBox="0 0 18 18">{app.art}</svg>
                        </TaskButton>
                    ))}
                </PinnedApps>
                <Tray>
                    <TrayButton type="button" aria-label="Show hidden icons" $w={16}>
                        <svg width="9" height="6"><path d="M1 5l3.500-4L8 5" fill="none" stroke="#eee" /></svg>
                    </TrayButton>
                    <TrayButton type="button" aria-label="Battery" $w={16}>
                        <svg width="11" height="8"><path d="M3 2h7v5H3z" fill="#eee" /><path d="M10.500 3v3M1 1h3M2 0v4l2 1" stroke="#eee" fill="none" /></svg>
                    </TrayButton>
                    <TrayButton type="button" aria-label="Volume" $w={16}>
                        <svg width="11" height="9"><path d="M1 3.500h2l2-2.500v7L3 5.500H1z" fill="none" stroke="#eee" /><path d="M6.500 3q1 1.500 0 3M8.500 2q2 2.500 0 5" fill="none" stroke="#bbb" /></svg>
                    </TrayButton>
                    <TrayButton type="button" aria-label="Dropbox" $w={16}>
                        <svg width="11" height="10"><path d="M3 0l2.500 1.700L3 3.400.500 1.700zM8 0l2.500 1.700L8 3.400 5.500 1.700zM3 3.400l2.500 1.700L3 6.800.500 5.100zM8 3.400l2.500 1.700L8 6.800 5.500 5.100zM5.500 6.200L8 7.900 5.500 9.600 3 7.900z" fill="#fff" /></svg>
                    </TrayButton>
                    <TrayButton type="button" $w={22}>ENG</TrayButton>
                    <Clock>3:06 PM<br />8/14/2020</Clock>
                    <TrayButton type="button" aria-label="4 notifications" $w={31}>
                        <svg width="16" height="16" viewBox="0 0 16 16">
                            <path d="M0 1h11v8H6l-3 3V9H0z" fill="#fff" />
                            <path d="M2 3.500h7M2 5.500h7" stroke="#333" />
                            <circle cx="10.500" cy="10.500" r="5" fill="#3a3a3a" stroke="#999" />
                            <text x="8" y="13" fontSize="8" fill="#fff">4</text>
                        </svg>
                    </TrayButton>
                </Tray>
            </TaskBar>
        </Shell>
    );
}
